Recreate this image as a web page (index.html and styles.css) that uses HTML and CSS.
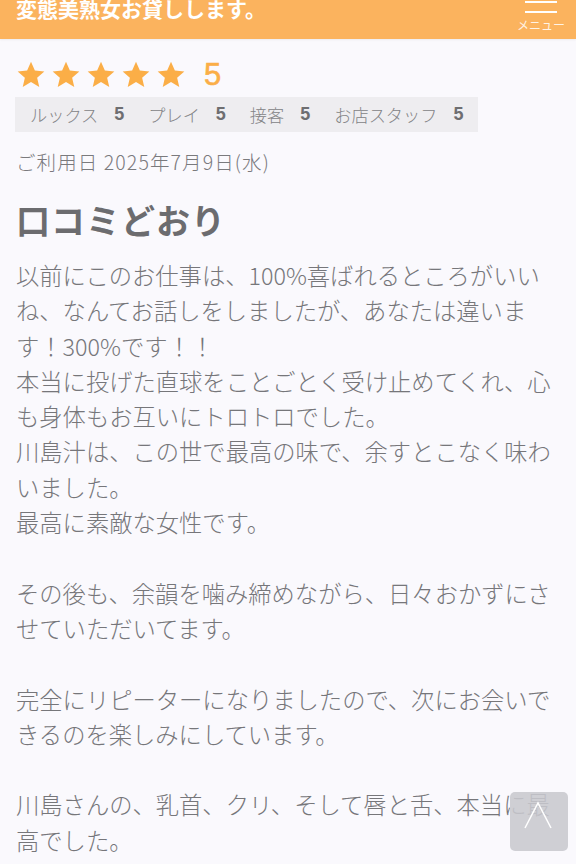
FILE: index.html
```html
<!DOCTYPE html>
<html lang="ja">
<head>
<meta charset="utf-8">
<title>口コミ</title>
<link rel="stylesheet" href="styles.css">
</head>
<body>
<header class="site-header">
  <div class="site-title">変態美熟女お貸しします。</div>
  <div class="menu">
    <span class="menu-bar"></span>
    <span class="menu-bar"></span>
    <span class="menu-label">メニュー</span>
  </div>
</header>
<main class="review">
  <div class="stars">
    <svg class="star" viewBox="0 0 24 24"><polygon points="12,2 14.9,8.6 22,9.3 16.6,14 18.2,21 12,17.3 5.8,21 7.4,14 2,9.3 9.1,8.6"/></svg>
    <svg class="star" viewBox="0 0 24 24"><polygon points="12,2 14.9,8.6 22,9.3 16.6,14 18.2,21 12,17.3 5.8,21 7.4,14 2,9.3 9.1,8.6"/></svg>
    <svg class="star" viewBox="0 0 24 24"><polygon points="12,2 14.9,8.6 22,9.3 16.6,14 18.2,21 12,17.3 5.8,21 7.4,14 2,9.3 9.1,8.6"/></svg>
    <svg class="star" viewBox="0 0 24 24"><polygon points="12,2 14.9,8.6 22,9.3 16.6,14 18.2,21 12,17.3 5.8,21 7.4,14 2,9.3 9.1,8.6"/></svg>
    <svg class="star" viewBox="0 0 24 24"><polygon points="12,2 14.9,8.6 22,9.3 16.6,14 18.2,21 12,17.3 5.8,21 7.4,14 2,9.3 9.1,8.6"/></svg>
    <span class="score">5</span>
  </div>
  <div class="ratings">
    <span class="rating"><span class="rating-label">ルックス</span><b class="rating-value">5</b></span>
    <span class="rating"><span class="rating-label">プレイ</span><b class="rating-value">5</b></span>
    <span class="rating"><span class="rating-label">接客</span><b class="rating-value">5</b></span>
    <span class="rating"><span class="rating-label">お店スタッフ</span><b class="rating-value">5</b></span>
  </div>
  <div class="visit-date">ご利用日 2025年7月9日(水)</div>
  <h2 class="review-title">口コミどおり</h2>
  <div class="review-body">
    <p>以前にこのお仕事は、100%喜ばれるところがいいね、なんてお話しをしましたが、あなたは違います！300%です！！<br>本当に投げた直球をことごとく受け止めてくれ、心も身体もお互いにトロトロでした。<br>川島汁は、この世で最高の味で、余すとこなく味わいました。<br>最高に素敵な女性です。</p>
    <p>その後も、余韻を噛み締めながら、日々おかずにさせていただいてます。</p>
    <p>完全にリピーターになりましたので、次にお会いできるのを楽しみにしています。</p>
    <p>川島さんの、乳首、クリ、そして唇と舌、本当に最高でした。</p>
  </div>
</main>
<a class="to-top" href="#">
  <svg viewBox="0 0 58 59"><polyline points="15,36 28,11 41,36" fill="none" stroke="#ffffff" stroke-width="1.5"/></svg>
</a>
</body>
</html>
```

FILE: styles.css
```css
html, body {
  margin: 0;
  padding: 0;
}
body {
  background: #faf9fd;
  font-family: "Noto Sans CJK JP", "Noto Sans", sans-serif;
  color: #76767a;
  height: 864px;
  overflow: hidden;
}
.site-header {
  height: 39px;
  background: #fbb35e;
  display: flex;
  justify-content: space-between;
  align-items: flex-start;
  padding: 0 6px 0 16px;
  box-shadow: 0 1px 2px rgba(0,0,0,0.06);
  overflow: hidden;
}
.site-title {
  color: #ffffff;
  font-size: 21px;
  font-weight: bold;
  line-height: 21px;
  margin-top: -2px;
  white-space: nowrap;
}
.menu {
  display: flex;
  flex-direction: column;
  align-items: center;
  width: 58px;
}
.menu-bar {
  display: block;
  width: 32px;
  height: 2px;
  background: #ffffff;
  margin-top: 1px;
  margin-bottom: 8px;
}
.menu-bar + .menu-bar {
  margin-top: 0;
  margin-bottom: 6px;
}
.menu-label {
  font-size: 12px;
  line-height: 12px;
  color: rgba(255,255,255,0.85);
  white-space: nowrap;
}
.review {
  padding: 0 16px;
}
.stars {
  display: flex;
  align-items: center;
  height: 34px;
  margin-top: 19px;
  margin-left: -1px;
}
.star {
  width: 32px;
  height: 32px;
  fill: #fbae47;
  margin-right: 3px;
  flex: none;
}
.score {
  color: #fbae47;
  font-size: 31px;
  line-height: 34px;
  margin-left: 14px;
  font-family: "Liberation Sans", "Noto Sans", sans-serif;
  -webkit-text-stroke: 0.6px #fbae47;
}
.ratings {
  display: inline-flex;
  align-items: center;
  gap: 24px;
  height: 35px;
  margin-top: 5px;
  margin-left: -1px;
  padding: 0 15px;
  background: #eeedf0;
  font-size: 17.2px;
  color: #838386;
}
.rating {
  display: flex;
  align-items: center;
  gap: 16px;
}
.rating-label {
  font-weight: 300;
}
.rating-value {
  font-family: "Liberation Sans", "Noto Sans", sans-serif;
  font-weight: bold;
  font-size: 18px;
  color: #6e6e71;
}
.visit-date {
  margin-top: 16px;
  font-size: 19.5px;
  line-height: 28px;
  color: #7a7a7d;
  font-weight: 300;
  letter-spacing: 1.1px;
}
.review-title {
  margin: 22px 0 0;
  font-size: 34px;
  line-height: 44px;
  font-weight: bold;
  color: #6c6c6f;
  letter-spacing: 1px;
}
.review-body {
  margin-top: 16px;
  font-size: 23.3px;
  line-height: 35.3px;
  font-weight: 300;
}
.review-body p {
  margin: 0 0 35.3px;
}
.to-top {
  position: fixed;
  right: 8px;
  bottom: 13px;
  width: 58px;
  height: 59px;
  border-radius: 5px;
  background: rgba(200,200,206,0.88);
  display: block;
}
.to-top svg {
  display: block;
  width: 58px;
  height: 59px;
}
```
